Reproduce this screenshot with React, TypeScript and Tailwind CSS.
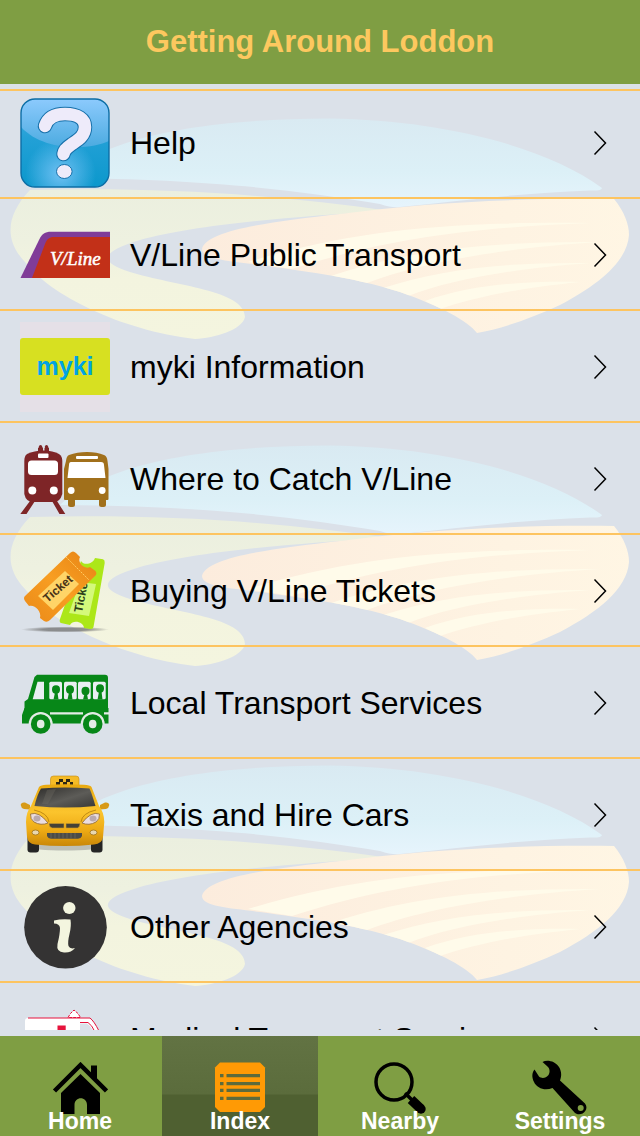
import React from "react";

const HelpIcon = () => (
  <svg viewBox="0 0 90 90" className="w-full h-full">
    <defs>
      <linearGradient id="helpBase" x1="0" y1="0" x2="0" y2="1">
        <stop offset="0" stopColor="#4aaee2" />
        <stop offset="0.45" stopColor="#22a0d6" />
        <stop offset="1" stopColor="#0c98cc" />
      </linearGradient>
      <linearGradient id="helpShine" x1="0" y1="0" x2="0" y2="1">
        <stop offset="0" stopColor="#8ccafd" />
        <stop offset="1" stopColor="#4cabe0" />
      </linearGradient>
      <radialGradient id="helpGlow" cx="0.45" cy="0.85" r="0.4">
        <stop offset="0" stopColor="#6fc0f3" />
        <stop offset="1" stopColor="#6fc0f3" stopOpacity="0" />
      </radialGradient>
    </defs>
    <rect x="1" y="1" width="88" height="88" rx="14" fill="url(#helpBase)" />
    <rect x="1" y="1" width="88" height="88" rx="14" fill="url(#helpGlow)" />
    <path d="M1 15A14 14 0 0 1 15 1H75A14 14 0 0 1 89 15V43C70 52 24 54 1 29Z" fill="url(#helpShine)" />
    <rect x="1" y="1" width="88" height="88" rx="14" fill="none" stroke="#0d6ea5" strokeWidth="1.4" />
    <g fill="none" strokeLinecap="round" strokeLinejoin="round">
      <path d="M25 28C28 19 35 16 45 16C58 16 65 21 65 29C65 38 58 42 52 46C45 51 44 53 43.500 56" stroke="#1670aa" strokeWidth="14.5" />
      <path d="M25 28C28 19 35 16 45 16C58 16 65 21 65 29C65 38 58 42 52 46C45 51 44 53 43.500 56" stroke="#eeebfa" strokeWidth="12.5" />
    </g>
    <ellipse cx="44.3" cy="73.5" rx="7.8" ry="7" fill="#eeebfa" stroke="#1670aa" strokeWidth="1" />
  </svg>
);

const VLineIcon = () => (
  <svg viewBox="0 0 90 90" className="w-full h-full">
    <path d="M.5 68L19.5 29C22 24 25 21.7 31 21.7H90V68Z" fill="#803c98" />
    <path d="M12 68L25 34C27 29 29 27 34 27H90V68Z" fill="#c23018" />
    <text x="30" y="55" fontFamily="'Liberation Serif', serif" fontStyle="italic" fontSize="19" fill="#fff" stroke="#fff" strokeWidth="0.5">
      V/Line
    </text>
  </svg>
);

const MykiIcon = () => (
  <svg viewBox="0 0 90 90" className="w-full h-full">
    <rect width="90" height="90" fill="#e5e0e7" />
    <rect y="16" width="90" height="57" rx="3" fill="#d7e021" />
    <text x="45" y="53" textAnchor="middle" fontFamily="'Liberation Sans', sans-serif" fontWeight="bold" fontSize="25" fill="#00a3e4">
      myki
    </text>
  </svg>
);

const TrainBusIcon = () => (
  <svg viewBox="0 0 90 90" className="w-full h-full">
    <g fill="#7e2527">
      <path d="M7 20Q14 16.500 23.500 16.500T39 20Q42.300 22 42.300 27V60Q40 68 34 68H13Q6 68 4.300 60V27Q4.300 22 7 20Z" />
      <path d="M18 17V14L21 11.500 23 14V17ZM24.500 17V14L26.500 11.500 29 14V17Z" />
      <circle cx="20.500" cy="12.500" r="1.600" />
      <circle cx="26.500" cy="12.500" r="1.600" />
      <path d="M10 67H15L6.500 80H.3ZM32 67H37L45.300 80H39.500Z" />
    </g>
    <rect x="18" y="19.500" width="10.500" height="4.500" rx="1" fill="#fff" />
    <rect x="8" y="26.500" width="30" height="14.500" rx="3.500" fill="#fff" />
    <circle cx="12.300" cy="56.500" r="4" fill="#fff" />
    <circle cx="33.800" cy="56.500" r="4" fill="#fff" />
    <g fill="#a1701b">
      <path d="M49 21Q57 18 67 18T84 21Q87 22 87.500 27L88.500 35V65Q88.500 66 87.500 66H45Q44 66 44 65V35L46 27Q46.500 22 49 21Z" />
      <rect x="48" y="64" width="7" height="9" rx="2.500" />
      <rect x="79" y="64" width="7" height="9" rx="2.500" />
    </g>
    <rect x="56" y="22" width="22" height="3" rx="1" fill="#fff" />
    <path d="M51 28H81Q84 28 84 31L85.500 44H47.500L49 31Q49 28 51 28Z" fill="#fff" />
    <circle cx="51.200" cy="56.500" r="3.400" fill="#fff" />
    <circle cx="82.200" cy="56.500" r="3.400" fill="#fff" />
  </svg>
);

const TicketIcon = () => (
  <svg viewBox="0 0 90 90" className="w-full h-full">
    <defs>
      <linearGradient id="ticketOrange" x1="0" y1="1" x2="1" y2="0">
        <stop offset="0" stopColor="#ea8918" />
        <stop offset="0.5" stopColor="#f89e22" />
        <stop offset="1" stopColor="#e68314" />
      </linearGradient>
      <radialGradient id="ticketShadow">
        <stop offset="0.5" stopColor="#777" stopOpacity="0.8" />
        <stop offset="1" stopColor="#777" stopOpacity="0" />
      </radialGradient>
    </defs>
    <ellipse cx="45" cy="83.500" rx="44" ry="3" fill="url(#ticketShadow)" />
    <path d="M61 15C64 20 73 18 75 12L83 13.300Q85 14 84.700 17L73.500 81Q73 83.500 70 83L64 82C64 76 53 73 50 79L41 77Q39 76 40 73L48 50Z" fill="#ace718" />
    <path d="M60 36L76 38 69 70 49 67Z" fill="#d4f97b" />
    <text transform="translate(62 67) rotate(-79)" fontFamily="'Liberation Sans', sans-serif" fontWeight="bold" fontSize="12" fill="#2d401a">
      Ticket
    </text>
    <path d="M5 50L50 7Q53 4 56 7L60 11C57 16 64 24 70 21L75.500 25Q77.500 28 75 30L30 74Q27 77 24 75L20 72C22 65 14 58 9 60L5 55Q3 52 5 50Z" fill="url(#ticketOrange)" />
    <path d="M46 11L69 34" stroke="#ffcb60" strokeWidth="1" strokeDasharray="2 1" />
    <path d="M18 50L45 25 59 38 33 64Z" fill="#ffd467" />
    <text transform="translate(27.500 57) rotate(-41)" fontFamily="'Liberation Sans', sans-serif" fontWeight="bold" fontSize="12" fill="#493417">
      Ticket
    </text>
  </svg>
);

const heads = [
  { x: 29.3, cx: 36, cy: 31.500 },
  { x: 44, cx: 50, cy: 31.500 },
  { x: 58, cx: 65.500, cy: 33 },
  { x: 73, cx: 80, cy: 30.500 },
];

const LocalBusIcon = () => (
  <svg viewBox="0 0 90 90" className="w-full h-full">
    <path d="M17 16.700H85Q88 16.700 88 20V53H4.500V43.500L8 41 14.500 19Z" fill="#078718" />
    <path d="M4.500 50H88.500V65.500H2V57Z" fill="#078718" />
    <path d="M30 55.300H63M84 55.300H89" stroke="#e3ece6" strokeWidth="2.200" />
    <path d="M17.500 23.700H24V41.300H12.700Z" fill="#e9eff2" />
    {heads.map((h) => (
      <g key={h.x}>
        <rect x={h.x} y="23.700" width="12.700" height="17.500" rx="1.500" fill="#e9eff2" />
        <ellipse cx={h.cx} cy={h.cy} rx="4" ry="4.200" fill="#078718" />
        <path d={`M${h.cx - 1} ${h.cy + 3}H${h.cx + 1.500}L${h.cx + 2.500} 41.500H${h.cx - 2.500}Z`} fill="#078718" />
      </g>
    ))}
    {[20.7, 72.700].map((cx) => (
      <g key={cx}>
        <path d={`M${cx - 12} 66A12 12 0 0 1 ${cx + 12} 66Z`} fill="#e3ece6" />
        <circle cx={cx} cy="66" r="9.800" fill="#078718" />
        <ellipse cx={cx} cy="66" rx="3.800" ry="4.300" fill="#e3ece6" />
      </g>
    ))}
  </svg>
);

const TaxiIcon = () => (
  <svg viewBox="0 0 90 90" className="w-full h-full">
    <defs>
      <linearGradient id="taxiBody" x1="0" y1="0" x2="0" y2="1">
        <stop offset="0" stopColor="#e9a90f" />
        <stop offset="0.45" stopColor="#fbc42d" />
        <stop offset="0.75" stopColor="#edaa14" />
        <stop offset="1" stopColor="#c98708" />
      </linearGradient>
      <linearGradient id="taxiGlass" x1="0" y1="0" x2="1" y2="1">
        <stop offset="0" stopColor="#2e2d2b" />
        <stop offset="0.55" stopColor="#5d5c58" />
        <stop offset="1" stopColor="#393835" />
      </linearGradient>
    </defs>
    <ellipse cx="45" cy="77" rx="36" ry="3.500" fill="#777" opacity="0.4" />
    <rect x="7.500" y="62" width="11.500" height="20.500" rx="3" fill="#252525" />
    <rect x="71" y="62" width="11.500" height="20.500" rx="3" fill="#252525" />
    <rect x="30.500" y="6" width="28.500" height="12" rx="3" fill="#f5bb27" stroke="#c48912" strokeWidth="0.600" />
    <path d="M36 12h3V9h4v3h3V9h4v3h3v3h-3v-3h-3v3h-4v-3h-3v3h-4z" fill="#2c2615" />
    <path d="M.7 35Q1 32 5 32.500L10 35V39.500L4 39Q1 38 .7 35ZM89.300 35Q89 32 85 32.500L80 35V39.500L86 39Q89 38 89.300 35Z" fill="#d79a18" />
    <path d="M19 17Q21 15 26 14.800Q45 13.500 64 14.800Q70 15 71.500 17L79 36Q84 42 84.300 52L83 67Q82 74 74 74.500Q45 77.500 15 74.500Q8 74 7 67L6 52Q6 42 11 36Z" fill="url(#taxiBody)" />
    <path d="M21 18.500Q45 16.500 69.500 18.500Q72 24 75.500 36Q45 39 14.500 36Q17 25 21 18.500Z" fill="url(#taxiGlass)" />
    <path d="M27 20L22 34H28L36 19Z" fill="#77736b" opacity="0.300" />
    <path d="M14 40Q28 43 29 52M76 40Q62 43 61 52" fill="none" stroke="#c18a12" strokeWidth="1" />
    <path d="M10.500 44Q19 41 28 53Q21 56 14 52Q10 49 10.500 44ZM79.500 44Q71 41 62 53Q69 56 76 52Q80 49 79.500 44Z" fill="#eadde0" stroke="#97713c" strokeWidth="0.900" />
    <ellipse cx="17" cy="48.500" rx="3.500" ry="3" fill="#b9a9ae" />
    <ellipse cx="73" cy="48.500" rx="3.500" ry="3" fill="#b9a9ae" />
    <path d="M29 53.500H44V58H32Q29 57 29 53.500ZM46 53.500H60Q60 57 57.500 58H46Z" fill="#444036" stroke="#c9982d" strokeWidth="0.600" />
    <path d="M27 63H62V66Q61 68.700 58 68.700H31Q28 68.700 27 66Z" fill="#4b4b47" />
    <path d="M31 63V68.500M35 63V68.500M39 63V68.500M43 63V68.500M47 63V68.500M51 63V68.500M55 63V68.500" stroke="#75726a" strokeWidth="0.600" />
    <ellipse cx="15.500" cy="62.500" rx="3.500" ry="2.500" fill="#e8d7b0" stroke="#9e741d" strokeWidth="0.800" />
    <ellipse cx="73.500" cy="62.500" rx="3.500" ry="2.500" fill="#e8d7b0" stroke="#9e741d" strokeWidth="0.800" />
  </svg>
);

const InfoIcon = () => (
  <svg viewBox="0 0 90 90" className="w-full h-full">
    <circle cx="45.500" cy="45.300" r="41.300" fill="#343333" />
    <ellipse cx="49.300" cy="26" rx="6.200" ry="6" fill="#f3f5df" />
    <path d="M34 38.500Q42 36.500 50.500 37.500Q51.500 44 49.500 52Q47.500 60 48.500 64Q50 67.500 55 66Q51 71 44 70.500Q36 70 37.500 62Q40 52 40 46Q39.500 41.500 34 41.500Z" fill="#f3f5df" />
  </svg>
);

const AmbulanceIcon = () => (
  <svg viewBox="0 0 90 90" className="w-full h-full">
    <path d="M48 23.500L50.500 19.500 54 16 58 19.500 60.500 23.500Z" fill="#fff" stroke="#e6133c" strokeWidth="1" strokeDasharray="3 1" />
    <path d="M5 60V27Q5 24 8 24H69Q73 26 79 37L86 48V70H5Z" fill="#fff" />
    <path d="M60 29.500H67Q71 32 74 38H60Z" fill="#dbe1e9" />
    <path d="M8 24H70M60 28.500H68Q72 31 75 38M70 24Q74 27 79 37" fill="none" stroke="#e6133c" strokeWidth="1" />
    <path d="M37.500 31.500H45.700V37H50V45H45.700V50H37.500V45H33V37H37.500Z" fill="#e6133c" />
  </svg>
);

const items = [
  { label: "Help", icon: HelpIcon },
  { label: "V/Line Public Transport", icon: VLineIcon },
  { label: "myki Information", icon: MykiIcon },
  { label: "Where to Catch V/Line", icon: TrainBusIcon },
  { label: "Buying V/Line Tickets", icon: TicketIcon },
  { label: "Local Transport Services", icon: LocalBusIcon },
  { label: "Taxis and Hire Cars", icon: TaxiIcon },
  { label: "Other Agencies", icon: InfoIcon },
  { label: "Medical Transport Services", icon: AmbulanceIcon },
];

const HomeTab = () => (
  <svg viewBox="0 0 56 52" className="w-14 h-[52px] -mb-1">
    <path d="M9 52V31L28.500 12 48 31V52H35V43C35 34 22.500 34 22.500 43V52Z" />
    <path d="M39 3.500H45V20L39 14Z" />
    <path d="M2.500 29L28.500 3 54.500 29" fill="none" stroke="#000" strokeWidth="4.500" />
  </svg>
);

const IndexTab = () => (
  <svg viewBox="0 0 56 52" className="w-14 h-[52px] -mb-1">
    <path d="M8 .5H48L53 5.500V45L48 50H8L3 45V5.500Z" fill="#ff9a05" />
    <path d="M14.500 13.700H48M14.500 21.700H48M14.500 28.300H48M14.500 36.300H48M8 13.700H11.500M8 21.700H11.500M8 28.300H11.500M8 36.300H11.500" stroke="#5c6b3c" strokeWidth="3.200" />
  </svg>
);

const NearbyTab = () => (
  <svg viewBox="0 0 56 52" className="w-14 h-[52px] -mb-1">
    <circle cx="22" cy="20" r="18" fill="none" stroke="#000" strokeWidth="3.500" />
    <path d="M33 31L40 38" stroke="#000" strokeWidth="3.500" />
    <path d="M39 37.500L49 47" stroke="#000" strokeWidth="9.500" />
    <circle cx="49" cy="47" r="4.700" />
  </svg>
);

const SettingsTab = () => (
  <svg viewBox="0 0 56 52" className="w-14 h-[52px] -mb-1 overflow-visible">
    <path
      fillRule="evenodd"
      d="M10.500 0C15 -2.500 23 -1 27 5C30 10 29.500 15 28 18.500L53 41.500C58 48 49 55.500 43 51L20.500 26C13 29 5 26.500 2 20C-.5 15 0 10.500 2.500 7.500L7 14.500C10 17 14 16 16.500 13C18.500 10 17.500 6 15.500 4.500ZM48.700 43A3 3 0 1 0 48.700 49A3 3 0 1 0 48.700 43Z"
    />
  </svg>
);

const tabs = [
  { label: "Home", href: "#home", icon: HomeTab },
  { label: "Index", href: "#index", icon: IndexTab, active: true },
  { label: "Nearby", href: "#nearby", icon: NearbyTab },
  { label: "Settings", href: "#settings", icon: SettingsTab },
];

// Faded landscape logo, repeated down the page behind the rows
const Backdrop = () => (
  <svg className="absolute inset-0 w-full h-full" aria-hidden="true">
    <defs>
      <linearGradient id="sky" x1="0" y1="0" x2="0" y2="1">
        <stop offset="0" stopColor="#d9eaf2" />
        <stop offset="0.6" stopColor="#dcf0f7" />
        <stop offset="1" stopColor="#e6f4fc" />
      </linearGradient>
      <linearGradient id="grass" x1="0" y1="0" x2="0" y2="1">
        <stop offset="0" stopColor="#ebefdf" />
        <stop offset="0.35" stopColor="#eef1e0" />
        <stop offset="0.6" stopColor="#f3f4df" />
        <stop offset="1" stopColor="#f4f5df" />
      </linearGradient>
      <linearGradient id="field" x1="0" y1="0" x2="1" y2="0">
        <stop offset="0" stopColor="#fcecdd" />
        <stop offset="0.7" stopColor="#fef3e2" />
        <stop offset="1" stopColor="#fff6e4" />
      </linearGradient>
      <clipPath id="fieldShape">
        <path d="M202 169C206 150 270 142 340 134C430 122 520 118 614 119C624 131 629 144 629 155C627 182 598 205 560 225C530 239 500 249 477 253C468 241 440 226 400 212C350 196 300 191 260 185C232 181 202 180 202 169Z" />
      </clipPath>
      <g id="landscape">
        <path d="M60 98C100 63 180 39 330 38.500C440 40 545 66 602 108Q602 111 590 110.500C520 113 460 121 400 127Q392 128 380 124C290 109 200 99 60 98Z" fill="url(#sky)" />
        <path d="M30 110C160 107 270 114 390 131C280 137 190 146 140 160C100 172 98 182 130 192C175 206 245 210 245 237C242 250 215 258 195 259C120 250 50 215 25 182C4 160 6 135 30 110Z" fill="url(#grass)" />
        <g clipPath="url(#fieldShape)">
          <rect x="200" y="110" width="440" height="150" fill="url(#field)" />
          <g fill="#fffbea">
            <path d="M248 182C340 154 430 141 590 143C460 148 380 161 292 189Z" />
            <path d="M325 198C400 172 480 161 600 162C500 168 420 183 367 203Z" />
            <path d="M383 208C440 190 500 182 590 183C510 189 450 200 408 216Z" />
            <path d="M425 221C470 205 520 201 580 202C520 208 475 217 440 229Z" />
          </g>
        </g>
      </g>
    </defs>
    <use href="#landscape" y="-4" />
    <use href="#landscape" y="323" />
    <use href="#landscape" y="643" />
  </svg>
);

const App: React.FC = () => {
  return (
    <div className="h-screen flex flex-col bg-[#dbe1e9] font-['Liberation_Sans',Arial,sans-serif]">
      <header className="h-21 shrink-0 flex items-center justify-center bg-[#7f9e43]">
        <h1 className="text-[31px] leading-10 font-bold text-[#fdc85f]">Getting Around Loddon</h1>
      </header>

      <main className="relative flex-1 min-h-0 flex flex-col pt-[5px] pb-1.5">
        <Backdrop />
        <ul className="relative flex-1 min-h-0 overflow-y-auto [scrollbar-width:none] border-t-2 border-[#fdc460]">
          {items.map((item) => {
            const Icon = item.icon;

            return (
              <li key={item.label} className="group border-b-2 border-[#fdc460]">
                <a href="#" className="flex items-center pl-5 pr-8 pt-[11px] pb-[9px] group-first:pt-[7px]">
                  <span className="w-[90px] h-[90px] shrink-0">
                    <Icon />
                  </span>
                  <span className="flex-1 ml-5 text-[32px] leading-10 text-black">{item.label}</span>
                  <svg viewBox="0 0 16 26" className="w-4 h-[26px]" fill="none" stroke="#000" strokeWidth="1.500">
                    <path d="M2.500 1.500L13.500 13 2.500 24.500" />
                  </svg>
                </a>
              </li>
            );
          })}
        </ul>
      </main>

      <nav className="shrink-0 grid grid-cols-4 bg-[#7f9e43]">
        {tabs.map((tab) => {
          const Icon = tab.icon;

          return (
            <a
              key={tab.label}
              href={tab.href}
              aria-current={tab.active ? "page" : undefined}
              className={`flex flex-col items-center pt-[26px] pb-1 mx-0.5 text-[23px] leading-[22px] font-bold text-white ${
                tab.active ? "bg-[linear-gradient(#627343_0%,#5b6c3c_58%,#4f6031_59%,#4f6031_100%)]" : ""
              }`}
            >
              <Icon />
              <span className="relative">{tab.label}</span>
            </a>
          );
        })}
      </nav>
    </div>
  );
};

export default App;
